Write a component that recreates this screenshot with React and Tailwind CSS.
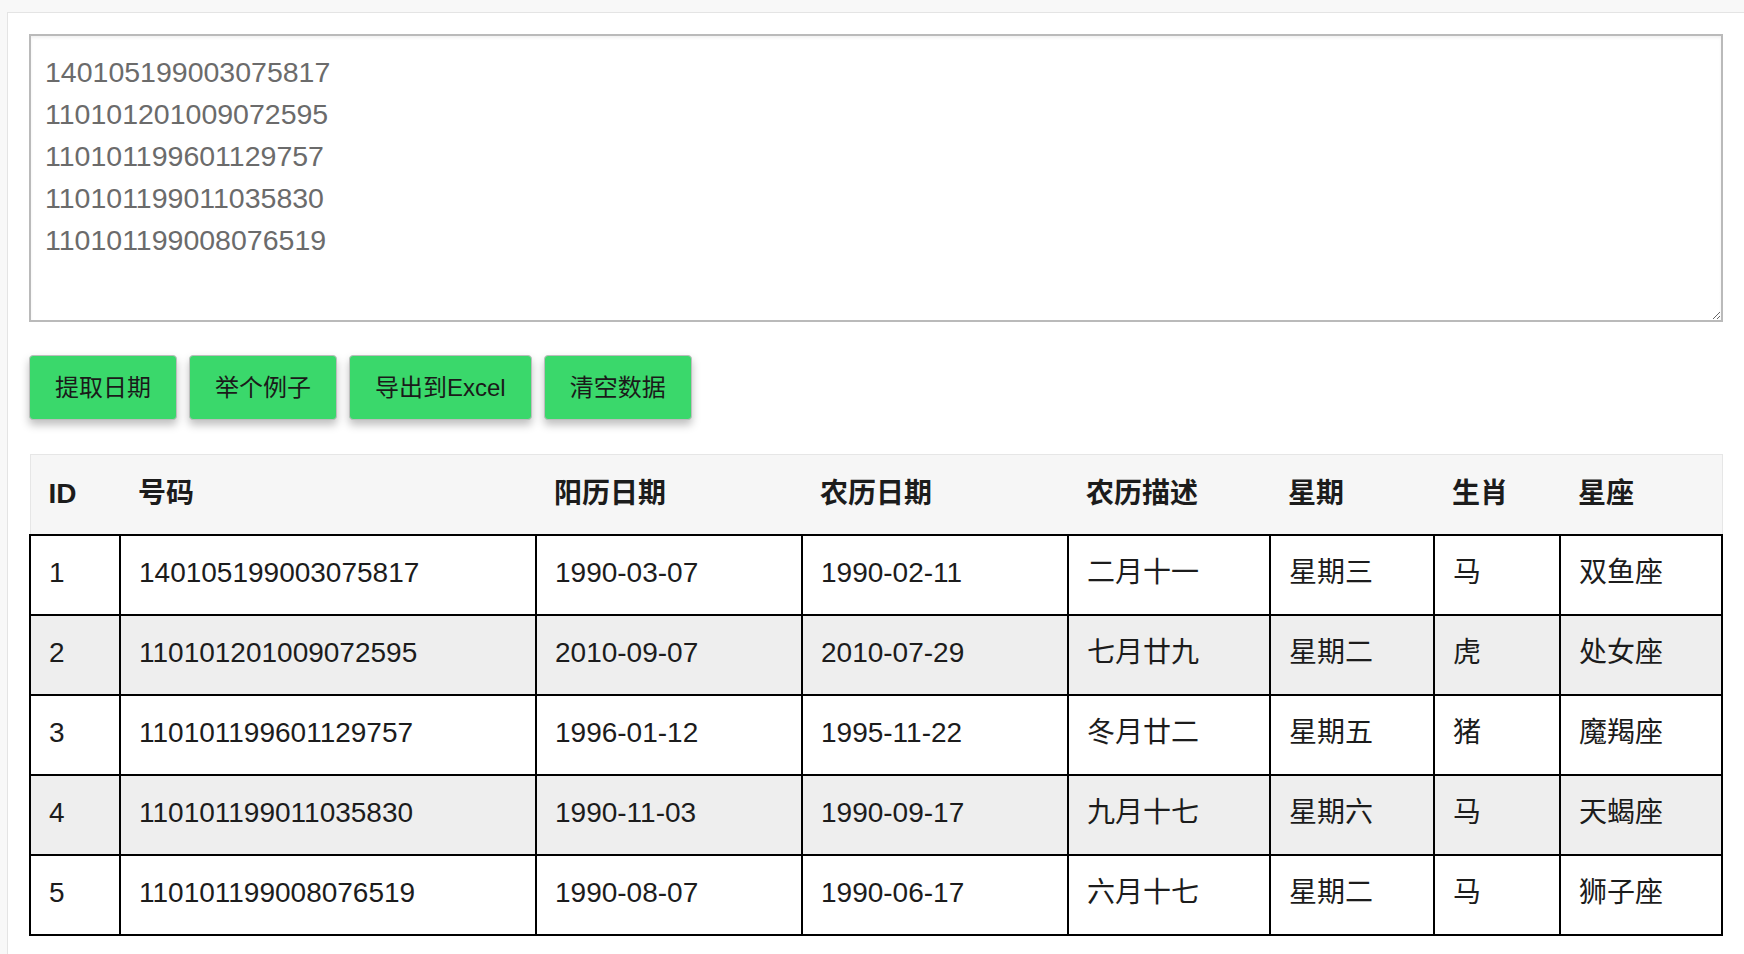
import { useState } from 'react';

const SAMPLE = [
    '140105199003075817',
    '110101201009072595',
    '110101199601129757',
    '110101199011035830',
    '110101199008076519',
].join('\n');

const ROWS = [
    { id: 1, code: '140105199003075817', solar: '1990-03-07', lunar: '1990-02-11', desc: '二月十一', week: '星期三', zodiac: '马', star: '双鱼座' },
    { id: 2, code: '110101201009072595', solar: '2010-09-07', lunar: '2010-07-29', desc: '七月廿九', week: '星期二', zodiac: '虎', star: '处女座' },
    { id: 3, code: '110101199601129757', solar: '1996-01-12', lunar: '1995-11-22', desc: '冬月廿二', week: '星期五', zodiac: '猪', star: '魔羯座' },
    { id: 4, code: '110101199011035830', solar: '1990-11-03', lunar: '1990-09-17', desc: '九月十七', week: '星期六', zodiac: '马', star: '天蝎座' },
    { id: 5, code: '110101199008076519', solar: '1990-08-07', lunar: '1990-06-17', desc: '六月十七', week: '星期二', zodiac: '马', star: '狮子座' },
];

const HEADERS = ['ID', '号码', '阳历日期', '农历日期', '农历描述', '星期', '生肖', '星座'];

function Button({ children, onClick }) {
    return (
        <button
            onClick={onClick}
            className="h-[65px] px-[25px] rounded-[4px] bg-[#3ad86b] border border-[#bdbdbd] text-[24px] text-[#1a1a1a] shadow-[0_5px_9px_rgba(0,0,0,0.25)]"
        >
            {children}
        </button>
    );
}

export default function App() {
    const [text, setText] = useState(SAMPLE);
    const [rows, setRows] = useState(ROWS);

    return (
        <div className="min-h-screen overflow-hidden bg-[#f8f8f8] pt-[12px] pl-[7px] font-['Liberation_Sans','Noto_Sans_CJK_SC',sans-serif]">
            <div className="w-[1770px] min-h-[960px] border border-[#e4e4e4] bg-white pt-[21px] pl-[21px]">
                <div className="w-[1694px]">
                    <textarea
                        value={text}
                        onChange={e => setText(e.target.value)}
                        className="block w-full h-[288px] border-2 border-[#bababa] pl-[14px] pr-[12px] pt-[15px] text-[28.5px] leading-[42px] text-[#6b6b6b] shadow-[inset_0_2px_3px_rgba(0,0,0,0.06)] outline-none"
                    />

                    <div className="mt-[33px] flex gap-[12px]">
                        <Button onClick={() => setRows(ROWS)}>提取日期</Button>
                        <Button onClick={() => setText(SAMPLE)}>举个例子</Button>
                        <Button>导出到Excel</Button>
                        <Button onClick={() => { setText(''); setRows([]); }}>清空数据</Button>
                    </div>

                    <table className="mt-[34px] w-full table-fixed border-collapse text-[28px] text-[#1c1c1c]">
                        <colgroup>
                            <col className="w-[90px]" />
                            <col className="w-[416px]" />
                            <col className="w-[266px]" />
                            <col className="w-[266px]" />
                            <col className="w-[202px]" />
                            <col className="w-[164px]" />
                            <col className="w-[126px]" />
                            <col className="w-[162px]" />
                        </colgroup>
                        <thead>
                            <tr className="bg-[#f6f6f6]">
                                {HEADERS.map((h, i) => (
                                    <th
                                        key={h}
                                        className={`h-[80px] px-[18px] text-left font-bold border-t border-[#e6e6e6] ${i === 0 ? 'border-l' : ''} ${i === HEADERS.length - 1 ? 'border-r' : ''}`}
                                    >
                                        {h}
                                    </th>
                                ))}
                            </tr>
                        </thead>
                        <tbody>
                            {rows.map((r, i) => (
                                <tr key={r.id} className={i % 2 === 1 ? 'bg-[#eeeeee]' : 'bg-white'}>
                                    {[r.id, r.code, r.solar, r.lunar, r.desc, r.week, r.zodiac, r.star].map((v, j) => (
                                        <td key={j} className="h-[80px] px-[18px] pb-[4px] border-2 border-black align-middle">
                                            {v}
                                        </td>
                                    ))}
                                </tr>
                            ))}
                        </tbody>
                    </table>
                </div>
            </div>
        </div>
    );
}
